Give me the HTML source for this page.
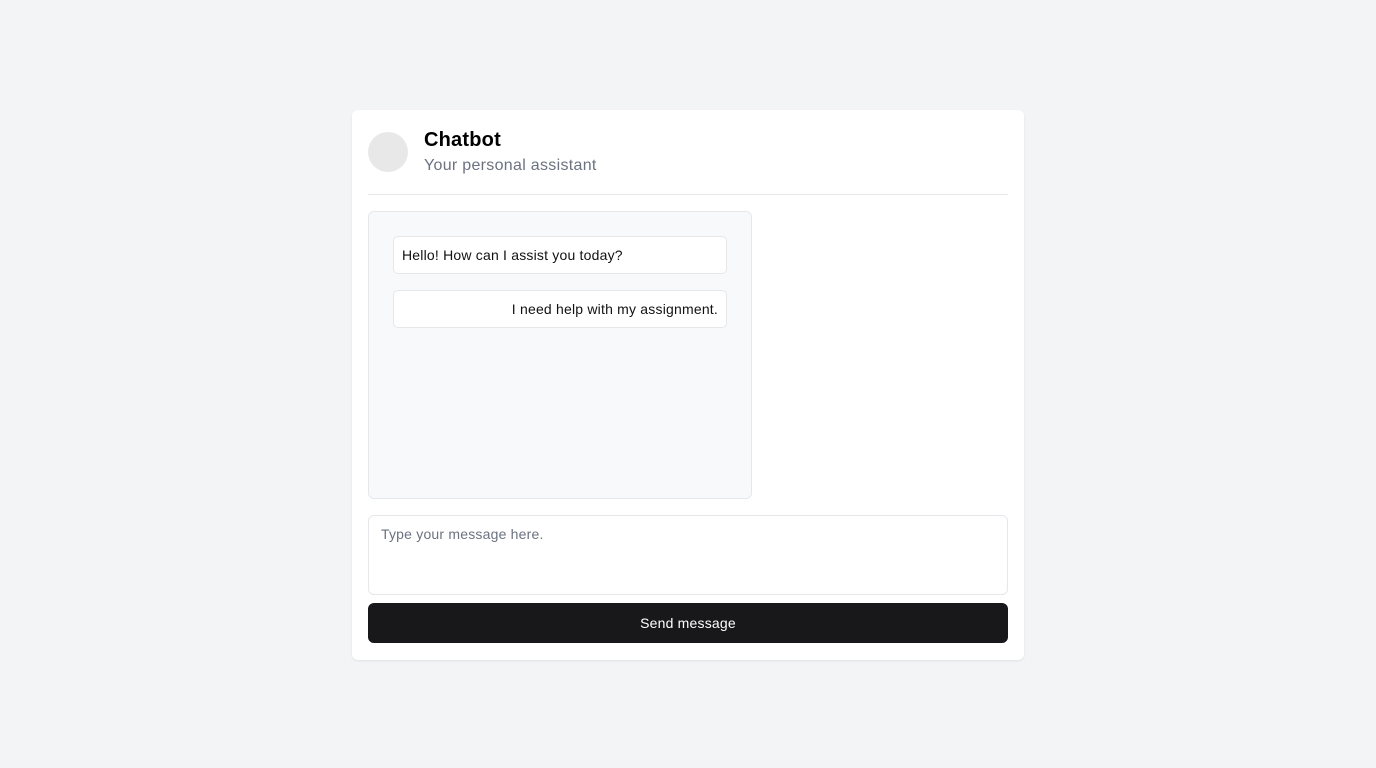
<!DOCTYPE html>
<html><head><style>
*{box-sizing:border-box;margin:0;padding:0}
body{width:1376px;height:768px;background:#f3f4f6;font-family:"Liberation Sans",sans-serif;position:relative}
.card{position:absolute;left:352px;top:110px;width:672px;height:550px;background:#fff;border-radius:6px;box-shadow:0 1px 2px rgba(0,0,0,.08)}
.av{position:absolute;left:16px;top:22px;width:40px;height:40px;border-radius:50%;background:#e8e8e8}
.t{position:absolute;left:72px;top:19px;font-size:20px;font-weight:bold;color:#000;letter-spacing:.2px}
.s{position:absolute;left:72px;top:47px;font-size:16px;color:#6b7280;letter-spacing:.3px}
.hr{position:absolute;left:16px;top:84px;width:640px;height:1px;background:#e5e7eb}
.box{position:absolute;left:16px;top:101px;width:384px;height:288px;background:#f8f9fa;border:1px solid #e5e7eb;border-radius:6px}
.m{position:absolute;left:24px;width:334px;height:38px;background:#fff;border:1px solid #e5e7eb;border-radius:5px;font-size:14px;color:#111;line-height:36px;padding:0 8px;letter-spacing:.2px}
.ta{position:absolute;left:16px;top:405px;width:640px;height:80px;border:1px solid #e5e7eb;border-radius:6px;padding:10px 12px;font-size:14px;color:#6b7280;letter-spacing:.2px}
.btn{position:absolute;left:16px;top:493px;width:640px;height:40px;background:#18181b;border-radius:6px;color:#fff;font-size:14px;text-align:center;line-height:40px;letter-spacing:.2px}
</style></head><body>
<div class="card">
<div class="av"></div>
<div class="t">Chatbot</div>
<div class="s">Your personal assistant</div>
<div class="hr"></div>
<div class="box">
<div class="m" style="top:24px">Hello! How can I assist you today?</div>
<div class="m" style="top:78px;text-align:right">I need help with my assignment.</div>
</div>
<div class="ta">Type your message here.</div>
<div class="btn">Send message</div>
</div>
</body></html>
